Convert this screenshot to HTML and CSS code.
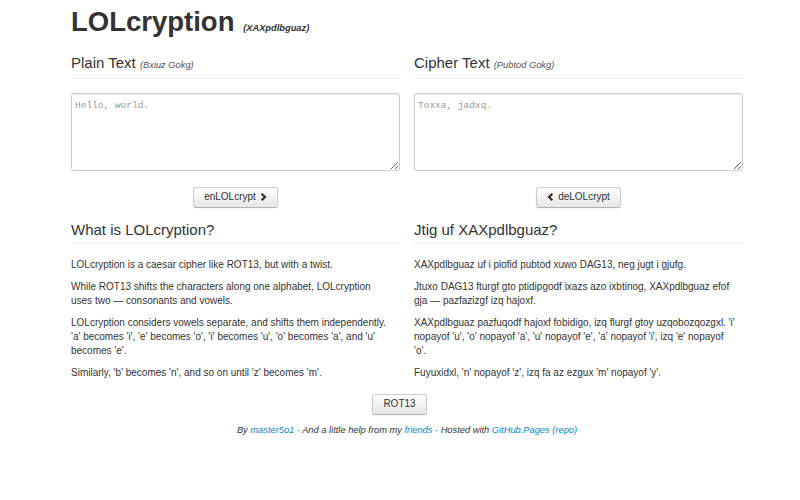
FILE: index.html
```html
<!DOCTYPE html>
<html lang="en">
<head>
<meta charset="utf-8">
<title>LOLcryption</title>
<link rel="stylesheet" href="styles.css">
</head>
<body>
<div class="container">
  <h1 class="title">LOLcryption <small>(XAXpdlbguaz)</small></h1>
  <div class="row">
    <div class="col">
      <h3 class="col-head">Plain Text <small>(Bxiuz Gokg)</small></h3>
      <textarea class="box" placeholder="Hello, world."></textarea>
      <div class="actions">
        <button class="btn">enLOLcrypt <svg class="chev" width="7" height="8" viewBox="0 0 7 8"><path d="M1.6 0.7 L5 4 L1.6 7.3" /></svg></button>
      </div>
      <h3 class="col-head col-head-about">What is LOLcryption?</h3>
      <p>LOLcryption is a caesar cipher like ROT13, but with a twist.</p>
      <p>While ROT13 shifts the characters along one alphabet, LOLcryption<br>uses two — consonants and vowels.</p>
      <p>LOLcryption considers vowels separate, and shifts them independently.<br>'a' becomes 'i', 'e' becomes 'o', 'i' becomes 'u', 'o' becomes 'a', and 'u'<br>becomes 'e'.</p>
      <p>Similarly, 'b' becomes 'n', and so on until 'z' becomes 'm'.</p>
    </div>
    <div class="col">
      <h3 class="col-head">Cipher Text <small>(Pubtod Gokg)</small></h3>
      <textarea class="box" placeholder="Toxxa, jadxq."></textarea>
      <div class="actions">
        <button class="btn"><svg class="chev" width="7" height="8" viewBox="0 0 7 8"><path d="M5.4 0.7 L2 4 L5.4 7.3" /></svg> deLOLcrypt</button>
      </div>
      <h3 class="col-head col-head-about">Jtig uf XAXpdlbguaz?</h3>
      <p>XAXpdlbguaz uf i piofid pubtod xuwo DAG13, neg jugt i gjufg.</p>
      <p>Jtuxo DAG13 fturgf gto ptidipgodf ixazs azo ixbtinog, XAXpdlbguaz efof<br>gja — pazfazizgf izq hajoxf.</p>
      <p>XAXpdlbguaz pazfuqodf hajoxf fobidigo, izq flurgf gtoy uzqobozqozgxl. 'i'<br>nopayof 'u', 'o' nopayof 'a', 'u' nopayof 'e', 'a' nopayof 'i', izq 'e' nopayof<br>'o'.</p>
      <p>Fuyuxidxl, 'n' nopayof 'z', izq fa az ezgux 'm' nopayof 'y'.</p>
    </div>
  </div>
  <div class="rot">
    <button class="btn">ROT13</button>
  </div>
  <p class="footer">By <a href="#">master5o1</a> · And a little help from my <a href="#">friends</a> · Hosted with <a href="#">GitHub.Pages</a> <a href="#">(repo)</a></p>
</div>
</body>
</html>
```

FILE: styles.css
```css
body {
  margin: 0;
  background: #fff;
  color: #333;
  font-family: "Liberation Sans", Arial, sans-serif;
  font-size: 10px;
  line-height: 14px;
}

.container {
  width: 672px;
  margin-left: 71px;
}

.title {
  margin: 4px 0 0;
  font-size: 27.5px;
  line-height: 35px;
  font-weight: bold;
  color: #333;
}

.title small {
  margin-left: 1px;
  font-size: 9.3px;
  line-height: 0;
  font-style: italic;
  font-weight: bold;
  color: #333;
}

.row {
  display: grid;
  grid-template-columns: 329px 329px;
  column-gap: 14px;
}

.col-head {
  margin: 14px 0 0;
  padding-bottom: 5px;
  border-bottom: 1px solid #eee;
  font-size: 15px;
  font-weight: normal;
  line-height: 20px;
  color: #333;
}

.col-head small {
  font-size: 9.3px;
  line-height: 0;
  font-style: italic;
  color: #555;
}

.col-head-about {
  margin-top: 12px;
  padding-bottom: 3px;
}

.box {
  display: block;
  box-sizing: border-box;
  width: 100%;
  height: 78px;
  margin: 14px 0 0;
  padding: 5px 3px;
  border: 1px solid #ccc;
  border-radius: 3px;
  box-shadow: inset 0 1px 1px rgba(0, 0, 0, 0.075);
  font-family: "Liberation Mono", "Courier New", monospace;
  font-size: 9.5px;
  line-height: 14px;
  color: #555;
  resize: both;
}

.box::placeholder {
  color: #999;
}

.actions {
  display: flex;
  justify-content: center;
  margin-top: 16px;
}

.btn {
  display: inline-flex;
  align-items: center;
  gap: 4px;
  padding: 2px 10px 3px;
  border: 1px solid #ccc;
  border-bottom-color: #b3b3b3;
  border-radius: 3px;
  background: linear-gradient(#ffffff, #e6e6e6);
  box-shadow: inset 0 1px 0 rgba(255, 255, 255, 0.2), 0 1px 2px rgba(0, 0, 0, 0.05);
  font-family: "Liberation Sans", Arial, sans-serif;
  font-size: 10px;
  line-height: 14px;
  color: #333;
  cursor: pointer;
}

.chev path {
  fill: none;
  stroke: #333;
  stroke-width: 2.2;
}

.col p {
  margin: 8px 0 0;
}

.col .col-head + p {
  margin-top: 14px;
}

.rot {
  display: flex;
  justify-content: center;
  margin-top: 14px;
  padding-right: 15px;
}

.footer {
  margin: 8px 0 0;
  text-align: center;
  font-size: 9.3px;
  line-height: 14px;
  font-style: italic;
  color: #333;
}

.footer a {
  color: #0088cc;
  text-decoration: none;
}
```
